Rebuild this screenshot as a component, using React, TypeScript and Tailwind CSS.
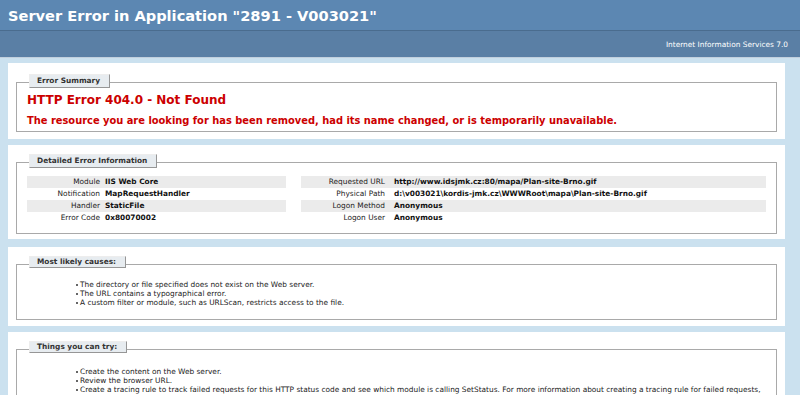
import React from "react";

const leftRows = [
  ["Module", "IIS Web Core"],
  ["Notification", "MapRequestHandler"],
  ["Handler", "StaticFile"],
  ["Error Code", "0x80070002"],
];

const rightRows = [
  ["Requested URL", "http://www.idsjmk.cz:80/mapa/Plan-site-Brno.gif"],
  ["Physical Path", "d:\\v003021\\kordis-jmk.cz\\WWWRoot\\mapa\\Plan-site-Brno.gif"],
  ["Logon Method", "Anonymous"],
  ["Logon User", "Anonymous"],
];

const causes = [
  "The directory or file specified does not exist on the Web server.",
  "The URL contains a typographical error.",
  "A custom filter or module, such as URLScan, restricts access to the file.",
];

const tries = [
  "Create the content on the Web server.",
  "Review the browser URL.",
  "Create a tracing rule to track failed requests for this HTTP status code and see which module is calling SetStatus. For more information about creating a tracing rule for failed requests, click here.",
];

function Legend({ children, tight }: { children: React.ReactNode; tight?: boolean }) {
  return (
    <div
      className={`w-fit ml-[2px] -mt-[9px] pl-[7px] pr-[9px] bg-[#e7ecf0] border border-t-[#ededed] border-l-[#ededed] border-r-[#969696] border-b-[#969696] text-[#333] font-bold text-[7.4px] ${
        tight ? "h-[12px] leading-[10px]" : "h-[14px] leading-[12px]"
      }`}
    >
      {children}
    </div>
  );
}

function DetailTable({
  rows,
  labelWidth,
  labelPad,
}: {
  rows: string[][];
  labelWidth: string;
  labelPad: string;
}) {
  return (
    <div className="flex flex-col">
      {rows.map(([label, value], i) => (
        <div
          key={label}
          className={`flex h-[12px] items-center text-[7.4px] ${i % 2 === 0 ? "bg-[#ebebeb]" : ""}`}
        >
          <div className={`${labelWidth} ${labelPad} shrink-0 text-right text-[#222]`}>{label}</div>
          <div className="font-bold text-[#111] whitespace-nowrap">{value}</div>
        </div>
      ))}
    </div>
  );
}

function BulletList({ items }: { items: string[] }) {
  return (
    <ul className="flex flex-col pl-[49px]">
      {items.map((item) => (
        <li key={item} className="flex items-start gap-[2px] text-[7.4px] leading-[9px] text-[#222]">
          <span className="mt-[4px] w-[2px] h-[2px] shrink-0 rounded-full bg-[#333]" />
          <span>{item}</span>
        </li>
      ))}
    </ul>
  );
}

export default function App() {
  return (
    <div className="min-h-screen bg-[#cbe1ef] font-['DejaVu_Sans',Verdana,sans-serif]">
      {/* header */}
      <div className="h-[30px] bg-[#5c87b2] pl-2 pt-[1px] leading-[29px] text-white font-bold text-[14.6px]">
        Server Error in Application "2891 - V003021"
      </div>
      <div className="h-[28px] bg-[#5a7fa5] border-t border-t-[#4a6c8e] border-b border-b-[#c1cfdd] pt-[9px] pr-[12px] text-right text-white text-[7.4px] leading-[10px]">
        Internet Information Services 7.0
      </div>

      <div className="flex flex-col">
        {/* error summary */}
        <div className="ml-2 mt-[5px] w-[777px] bg-white px-2 pt-[19px] pb-[7px]">
          <div className="border border-[#a9a9a9] px-[10px] pb-[4px]">
            <Legend>Error Summary</Legend>
            <h2 className="mt-[5px] text-[12px] leading-[15px] font-bold text-[#cc0000]">
              HTTP Error 404.0 - Not Found
            </h2>
            <h3 className="mt-[6px] text-[9.9px] leading-[13px] font-bold text-[#cc0000]">
              The resource you are looking for has been removed, had its name changed, or is temporarily unavailable.
            </h3>
          </div>
        </div>

        {/* detailed info */}
        <div className="ml-2 mt-[6px] w-[777px] bg-white px-2 pt-[17px] pb-[5px]">
          <div className="border border-[#a9a9a9] px-[10px] pb-[9px]">
            <Legend>Detailed Error Information</Legend>
            <div className="mt-[8px] flex">
              <div className="w-[259px] shrink-0">
                <DetailTable rows={leftRows} labelWidth="w-[78px]" labelPad="pr-[5px]" />
              </div>
              <div className="ml-[15px] flex-1">
                <DetailTable rows={rightRows} labelWidth="w-[93px]" labelPad="pr-[9px]" />
              </div>
            </div>
          </div>
        </div>

        {/* causes */}
        <div className="ml-2 mt-[8px] w-[777px] bg-white px-2 pt-[17px] pb-[6px]">
          <div className="border border-[#a9a9a9] px-[10px] pb-[12px]">
            <Legend tight>Most likely causes:</Legend>
            <div className="mt-[12px]">
              <BulletList items={causes} />
            </div>
          </div>
        </div>

        {/* things to try */}
        <div className="ml-2 mt-[6px] w-[777px] bg-white px-2 pt-[17px] pb-[6px]">
          <div className="border border-[#a9a9a9] px-[10px] pb-[12px]">
            <Legend tight>Things you can try:</Legend>
            <div className="mt-[14px]">
              <BulletList items={tries} />
            </div>
          </div>
        </div>
      </div>
    </div>
  );
}
